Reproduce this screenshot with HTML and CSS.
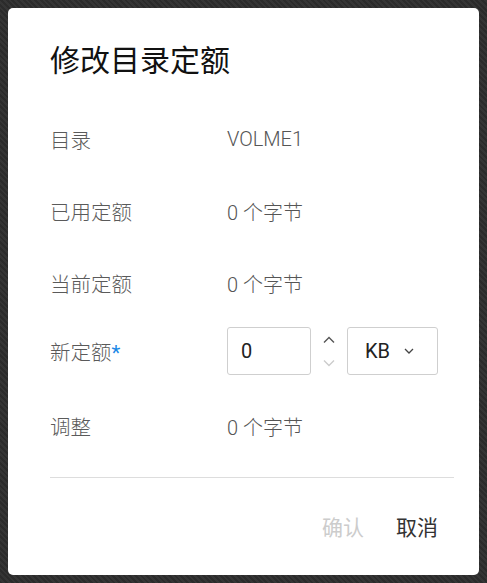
FILE: index.html
```html
<!DOCTYPE html>
<html lang="zh-CN">
<head>
  <meta charset="UTF-8">
  <meta name="viewport" content="width=device-width, initial-scale=1.0">
  <title>修改目录定额</title>
  <link rel="stylesheet" href="styles.css">
</head>
<body>
  <div class="dialog">
    <h1 class="dialog-title">修改目录定额</h1>

    <div class="field-row">
      <div class="field-label">目录</div>
      <div class="field-value">VOLME1</div>
    </div>
    <div class="field-row">
      <div class="field-label">已用定额</div>
      <div class="field-value">0 个字节</div>
    </div>
    <div class="field-row">
      <div class="field-label">当前定额</div>
      <div class="field-value">0 个字节</div>
    </div>
    <div class="field-row input-row">
      <div class="field-label">新定额<span class="required">*</span></div>
      <div class="quota-input">
        <input class="number-box" type="text" value="0">
        <div class="spinner">
          <svg class="spin-up" width="12" height="8" viewBox="0 0 12 8"><path d="M1 6.5 L6 1.5 L11 6.5" fill="none" stroke="currentColor" stroke-width="1.4"/></svg>
          <svg class="spin-down" width="12" height="8" viewBox="0 0 12 8"><path d="M1 1.5 L6 6.5 L11 1.5" fill="none" stroke="currentColor" stroke-width="1.4"/></svg>
        </div>
        <div class="unit-select">
          <span>KB</span>
          <svg width="10" height="6" viewBox="0 0 10 6"><path d="M1 1 L5 5 L9 1" fill="none" stroke="currentColor" stroke-width="1.3"/></svg>
        </div>
      </div>
    </div>
    <div class="field-row adjust-row">
      <div class="field-label">调整</div>
      <div class="field-value">0 个字节</div>
    </div>

    <div class="dialog-footer">
      <button class="btn btn-disabled">确认</button>
      <button class="btn">取消</button>
    </div>
  </div>
</body>
</html>
```

FILE: styles.css
```css
html, body {
  margin: 0;
  padding: 0;
  height: 100%;
}

body {
  padding: 8px;
  box-sizing: border-box;
  background: repeating-linear-gradient(45deg, #2b2b2b 0 2px, #353535 2px 4px);
  font-family: Roboto, "Noto Sans CJK SC", sans-serif;
}

.dialog {
  height: 567px;
  background-color: #FFFFFF;
  border-radius: 5px;
  padding: 33px 25px 0 42px;
  box-sizing: border-box;
  display: flex;
  flex-direction: column;
}

.dialog-title {
  margin: 0 0 34px;
  font-size: 30px;
  line-height: 40px;
  font-weight: 400;
  color: #111;
}

.field-row {
  display: flex;
  align-items: center;
  height: 48px;
  margin-bottom: 24px;
  font-size: 20px;
  color: #5a5a5a;
}

.input-row {
  margin-top: -4px;
  margin-bottom: 27px;
}

.field-label {
  width: 177px;
  flex-shrink: 0;
  font-size: 20.5px;
  font-weight: 300;
}

.required {
  color: #1a88e6;
  font-weight: 400;
}

.field-value {
  color: #555;
  font-weight: 300;
}

.quota-input {
  display: flex;
  align-items: center;
  height: 48px;
}

.number-box {
  width: 84px;
  height: 48px;
  box-sizing: border-box;
  border: 1px solid #cfcfcf;
  border-radius: 3px;
  padding: 0 0 0 13px;
  font: inherit;
  font-size: 20px;
  color: #222;
  outline: none;
}

.spinner {
  width: 36px;
  display: flex;
  flex-direction: column;
  align-items: center;
  gap: 15px;
}

.spin-up {
  color: #555;
}

.spin-down {
  color: #cccccc;
}

.unit-select {
  width: 91px;
  height: 48px;
  box-sizing: border-box;
  border: 1px solid #cfcfcf;
  border-radius: 3px;
  padding-left: 17px;
  display: flex;
  align-items: center;
  gap: 14px;
  font-size: 20px;
  color: #222;
}

.unit-select svg {
  color: #444;
}

.adjust-row {
  margin-bottom: 27px;
}

.dialog-footer {
  border-top: 1px solid #dddddd;
  display: flex;
  justify-content: flex-end;
  gap: 32px;
  padding: 34px 16px 0 0;
}

.btn {
  border: none;
  background: none;
  padding: 0;
  font-family: "Noto Sans CJK SC", sans-serif;
  font-size: 21px;
  line-height: 28px;
  color: #333;
  cursor: pointer;
}

.btn-disabled {
  color: #cccccc;
  cursor: default;
}
```
